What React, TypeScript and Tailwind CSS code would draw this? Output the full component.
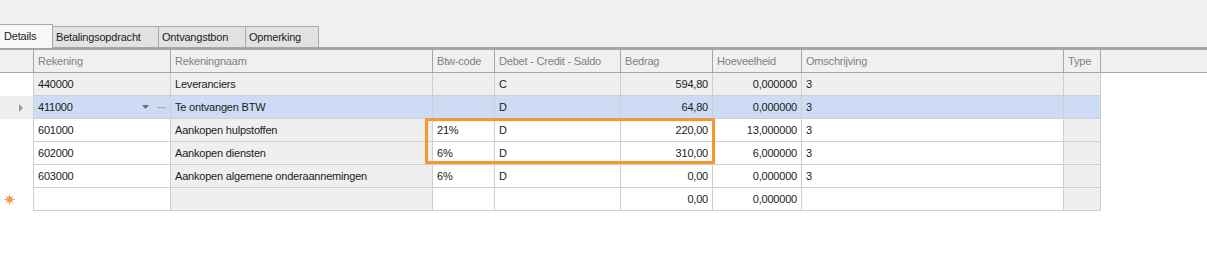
import { ReactNode } from 'react'

type Col = { key: string; label: string; w: string; right?: boolean }

const COLS: Col[] = [
  { key: 'rek', label: 'Rekening', w: 'w-[137px]' },
  { key: 'naam', label: 'Rekeningnaam', w: 'w-[262px]' },
  { key: 'btw', label: 'Btw-code', w: 'w-[62px]' },
  { key: 'dcs', label: 'Debet - Credit - Saldo', w: 'w-[126px]' },
  { key: 'bedrag', label: 'Bedrag', w: 'w-[92px]', right: true },
  { key: 'hoev', label: 'Hoeveelheid', w: 'w-[89px]', right: true },
  { key: 'oms', label: 'Omschrijving', w: 'w-[262px]' },
  { key: 'type', label: 'Type', w: 'w-[37px]' },
]

type Row = {
  values: Record<string, string>
  kind: 'locked' | 'selected' | 'normal' | 'new'
}

const ROWS: Row[] = [
  { kind: 'locked', values: { rek: '440000', naam: 'Leveranciers', btw: '', dcs: 'C', bedrag: '594,80', hoev: '0,000000', oms: '3', type: '' } },
  { kind: 'selected', values: { rek: '411000', naam: 'Te ontvangen BTW', btw: '', dcs: 'D', bedrag: '64,80', hoev: '0,000000', oms: '3', type: '' } },
  { kind: 'normal', values: { rek: '601000', naam: 'Aankopen hulpstoffen', btw: '21%', dcs: 'D', bedrag: '220,00', hoev: '13,000000', oms: '3', type: '' } },
  { kind: 'normal', values: { rek: '602000', naam: 'Aankopen diensten', btw: '6%', dcs: 'D', bedrag: '310,00', hoev: '6,000000', oms: '3', type: '' } },
  { kind: 'normal', values: { rek: '603000', naam: 'Aankopen algemene onderaannemingen', btw: '6%', dcs: 'D', bedrag: '0,00', hoev: '0,000000', oms: '3', type: '' } },
  { kind: 'new', values: { rek: '', naam: '', btw: '', dcs: '', bedrag: '0,00', hoev: '0,000000', oms: '', type: '' } },
]

// read-only columns stay grey on editable rows
const GREY_COLS = ['naam', 'type']

function cellBg(row: Row, key: string) {
  if (row.kind === 'selected') return 'bg-[#cddcf4]'
  if (row.kind === 'locked') return 'bg-[#efefef]'
  return GREY_COLS.includes(key) ? 'bg-[#efefef]' : 'bg-white'
}

function Cell({ w, right, bg, children }: { w: string; right?: boolean; bg: string; children?: ReactNode }) {
  return (
    <div
      className={`${w} ${bg} h-[23px] shrink-0 border-r border-b border-[#cfcfcf] flex items-center px-[4px] ${right ? 'justify-end' : ''}`}
    >
      {children}
    </div>
  )
}

function Tab({ label, active }: { label: string; active?: boolean }) {
  if (active) {
    return (
      <div className="h-[24px] w-[53px] bg-[#f7f7f7] border-t border-r border-[#a9a9a9] flex items-center pl-[4px] -mb-[1px] relative z-10">
        {label}
      </div>
    )
  }
  return (
    <div className="h-[21px] px-[3px] bg-[#e2e2e2] border-t border-r border-[#a9a9a9] flex items-center">
      {label}
    </div>
  )
}

export default function App() {
  return (
    <div
      className="w-[1207px] h-[275px] bg-white text-[11px] tracking-[-0.2px] text-[#1b1b1b] overflow-hidden"
      style={{ fontFamily: '"Liberation Sans", Arial, sans-serif' }}
    >
      {/* Tabs */}
      <div className="h-[47px] bg-[#f0f0f0] flex items-end">
        <Tab label="Details" active />
        <div className="w-[106px]">
          <Tab label="Betalingsopdracht" />
        </div>
        <div className="w-[87px]">
          <Tab label="Ontvangstbon" />
        </div>
        <div className="w-[73px]">
          <Tab label="Opmerking" />
        </div>
      </div>

      <div className="h-[3px] bg-[#a6a6a6]" />

      {/* Grid */}
      <div className="relative">
        {/* Header */}
        <div className="flex bg-[#f0f0f0] text-[#808080] border-b border-[#a6a6a6]">
          <div className="w-[34px] h-[22px] shrink-0 border-r border-[#a6a6a6]" />
          {COLS.map((c) => (
            <div
              key={c.key}
              className={`${c.w} h-[22px] shrink-0 border-r border-[#a6a6a6] flex items-center px-[4px]`}
            >
              {c.label}
            </div>
          ))}
        </div>

        {/* Rows */}
        {ROWS.map((row, i) => (
          <div key={i} className="flex">
            <div
              className={`w-[34px] h-[23px] shrink-0 border-r border-[#cfcfcf] flex items-center justify-end pr-[10px] ${row.kind === 'selected' ? 'bg-[#efefef]' : 'bg-white'}`}
            >
              {row.kind === 'selected' && (
                <svg width="4" height="8" viewBox="0 0 4 8">
                  <path d="M0 0 L4 4 L0 8 Z" fill="#9a9a9a" />
                </svg>
              )}
              {row.kind === 'new' && (
                <svg width="11" height="11" viewBox="0 0 11 11" className="mr-[8px]">
                  <g stroke="#f7b07a" strokeWidth="1">
                    <line x1="5.5" y1="0" x2="5.5" y2="11" />
                    <line x1="0" y1="5.5" x2="11" y2="5.5" />
                    <line x1="1.8" y1="1.8" x2="9.2" y2="9.2" />
                    <line x1="9.2" y1="1.8" x2="1.8" y2="9.2" />
                  </g>
                  <circle cx="5.5" cy="5.5" r="3" fill="#f39a4c" />
                </svg>
              )}
            </div>
            {COLS.map((c) => (
              <Cell key={c.key} w={c.w} right={c.right} bg={cellBg(row, c.key)}>
                {c.key === 'rek' && row.kind === 'selected' ? (
                  <div className="flex items-center w-full">
                    <span className="flex-1">{row.values[c.key]}</span>
                    <svg width="7" height="4" viewBox="0 0 7 4" className="mr-[8px]">
                      <path d="M0 0 L7 0 L3.5 4 Z" fill="#707070" />
                    </svg>
                    <span className="text-[#707070] text-[11px] tracking-[-1px] mr-[1px] leading-none">···</span>
                  </div>
                ) : (
                  row.values[c.key]
                )}
              </Cell>
            ))}
          </div>
        ))}

        {/* highlight annotation */}
        <div className="absolute left-[425px] top-[68px] w-[290px] h-[46px] border-[3px] border-[#f7962f] pointer-events-none" />
      </div>
    </div>
  )
}
